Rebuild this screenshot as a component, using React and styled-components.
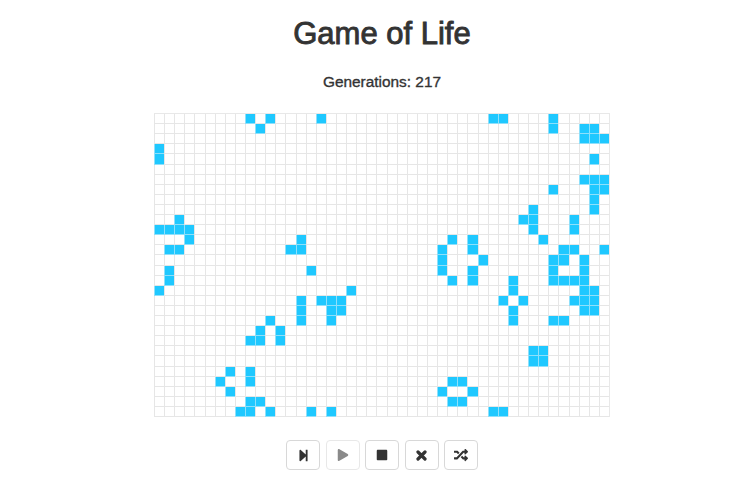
import React from 'react'
import styled, { createGlobalStyle } from 'styled-components'
import { FaStepForward, FaPlay, FaStop, FaRandom } from 'react-icons/fa'

const COLS = 45
const ROWS = 30

// live cells per row: row -> columns
const LIVE = {
    0: [9, 11, 16, 33, 34, 39],
    1: [10, 39, 42, 43],
    2: [42, 43, 44],
    3: [0],
    4: [0, 43],
    6: [42, 43, 44],
    7: [39, 43, 44],
    8: [43],
    9: [37, 43],
    10: [2, 36, 37, 41],
    11: [0, 1, 2, 3, 37, 41],
    12: [3, 14, 29, 31, 38],
    13: [1, 2, 13, 14, 28, 31, 40, 41, 44],
    14: [28, 32, 39, 40, 42],
    15: [1, 15, 28, 31, 39, 42],
    16: [1, 29, 31, 35, 39, 40, 41, 42],
    17: [0, 19, 35, 42, 43],
    18: [14, 16, 17, 18, 34, 36, 41, 42, 43],
    19: [14, 17, 18, 35, 42, 43],
    20: [11, 14, 17, 35, 39, 40],
    21: [10, 12],
    22: [9, 10, 12],
    23: [37, 38],
    24: [37, 38],
    25: [7, 9],
    26: [6, 9, 29, 30],
    27: [7, 28, 31],
    28: [9, 10, 29, 30],
    29: [8, 9, 11, 15, 17, 33, 34],
}

const GlobalStyle = createGlobalStyle`
    body {
        margin: 0;
        background-color: #fff;
        font-family: "Liberation Sans", Arial, sans-serif;
        color: #333;
    }
`
const Page = styled.div`
    display: flex;
    flex-direction: column;
    align-items: center;
    padding-left: 14px;
`
const Titulo = styled.h1`
    margin: 15px 0 0 0;
    font-size: 31px;
    line-height: 38px;
    font-weight: 400;
    -webkit-text-stroke: 0.9px #333;
`
const Geracoes = styled.h4`
    margin: 19px 0 0 0;
    font-size: 15.4px;
    line-height: 20px;
    font-weight: 400;
    -webkit-text-stroke: 0.35px #333;
`
const Board = styled.div`
    display: grid;
    grid-template-columns: repeat(${COLS}, 1fr);
    grid-template-rows: repeat(${ROWS}, 1fr);
    width: 456px;
    height: 304px;
    margin-top: 21px;
    box-sizing: border-box;
    border-top: 1px solid #e8e8e8;
    border-right: 1px solid #e8e8e8;
`
const Cell = styled.div`
    box-sizing: border-box;
    border-left: 1px solid #e6e6e6;
    border-bottom: 1px solid #e6e6e6;
    background-color: ${props => (props.$alive ? '#1fc8ff' : '#fff')};
    ${props => props.$alive && 'border-color: #8ee0fb;'}
`
const Toolbar = styled.div`
    display: flex;
    gap: 5.5px;
    margin-top: 23px;
`
const Botao = styled.button`
    display: flex;
    align-items: center;
    justify-content: center;
    width: 34px;
    height: 30px;
    padding: 0;
    background-color: #fff;
    border: 1px solid #d8d8d8;
    border-radius: 4px;
    color: #333;
    font-size: ${props => props.$size || 12}px;
    ${props => props.disabled && `
        border-color: #e8e8e8;
        color: #8a8a8a;
    `}
`

function IconeFechar() {
    return (
        <svg width="11" height="11" viewBox="0 0 11 11">
            <path d="M2 2 L9 9 M9 2 L2 9" stroke="currentColor" strokeWidth="3.2" strokeLinecap="round" />
        </svg>
    )
}

function App() {
    const cells = []
    for (let r = 0; r < ROWS; r++) {
        for (let c = 0; c < COLS; c++) {
            const alive = (LIVE[r] || []).includes(c)
            cells.push(<Cell key={r + '-' + c} $alive={alive} />)
        }
    }
    return (
        <Page>
            <GlobalStyle />
            <Titulo>Game of Life</Titulo>
            <Geracoes>Generations: 217</Geracoes>
            <Board>{cells}</Board>
            <Toolbar>
                <Botao aria-label="step" $size={13}><FaStepForward /></Botao>
                <Botao aria-label="play" $size={12} disabled><FaPlay /></Botao>
                <Botao aria-label="stop" $size={12}><FaStop /></Botao>
                <Botao aria-label="clear"><IconeFechar /></Botao>
                <Botao aria-label="random" $size={14}><FaRandom /></Botao>
            </Toolbar>
        </Page>
    )
}
export default App
